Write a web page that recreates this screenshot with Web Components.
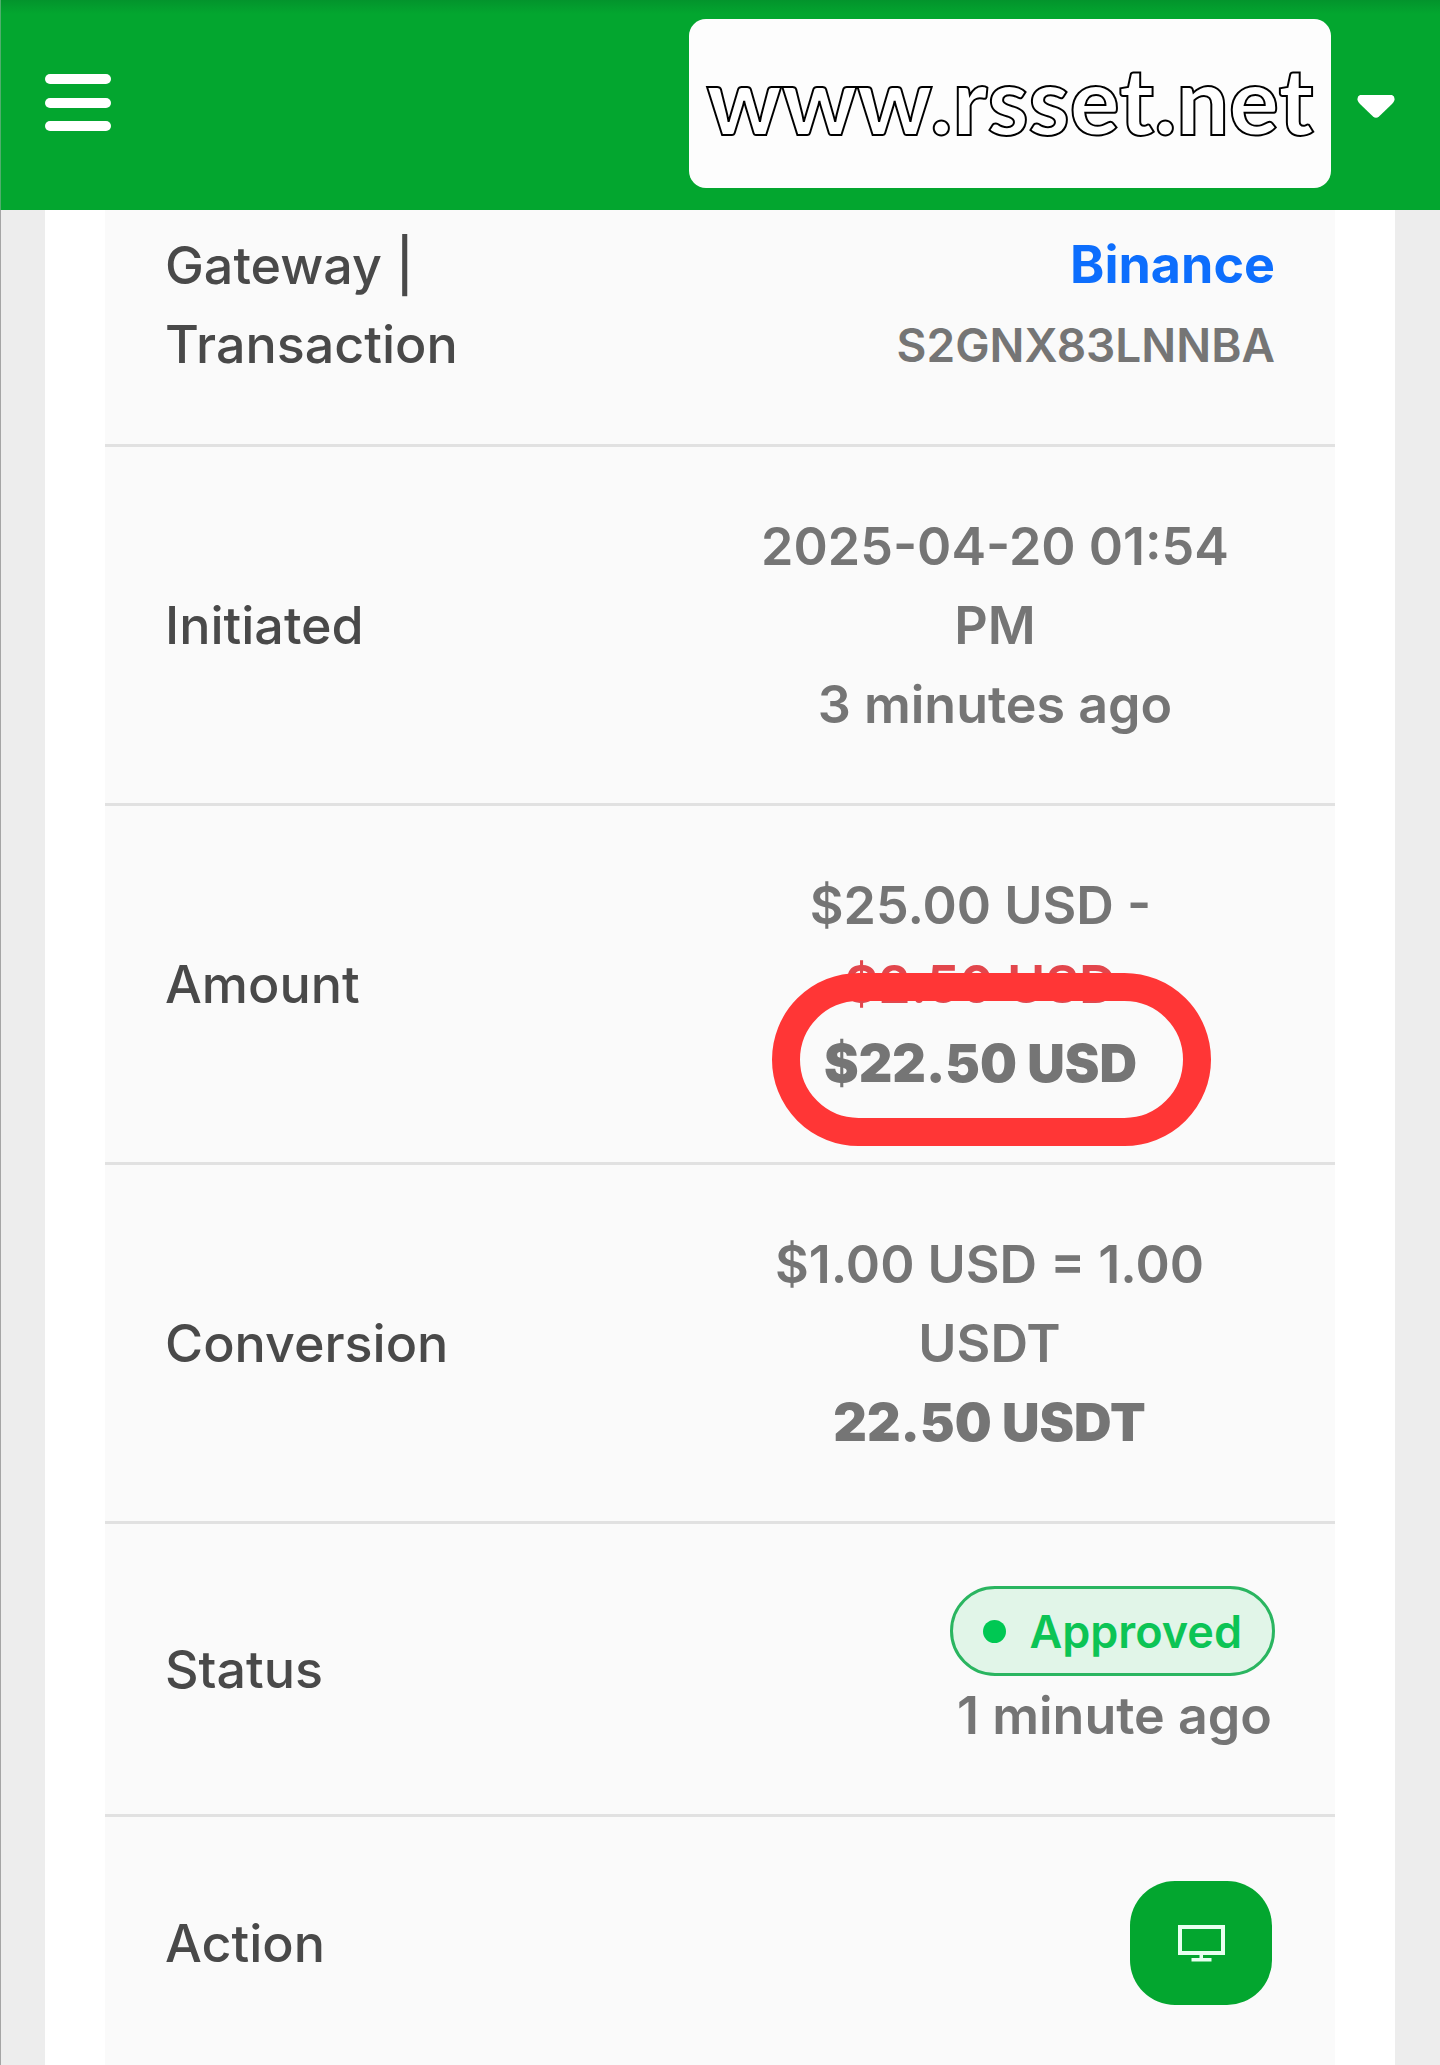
<!DOCTYPE html>
<html lang="en">
<head>
<meta charset="utf-8">
<meta name="viewport" content="width=device-width, initial-scale=1">
<title>Deposit history</title>
<style>
  html, body { margin: 0; }
  body { background: #ededed; font-family: Inter, "Liberation Sans", sans-serif; overflow-x: hidden; }
</style>
</head>
<body>
<deposit-page></deposit-page>

<template id="page-template">
  <style>
    :host { display: flex; flex-direction: column; min-height: 100vh; box-sizing: border-box; box-shadow: inset 1px 0 #a5a5a5; }
    main { flex: 1; display: flex; flex-direction: column; margin: 0 45px; padding: 0 60px; background: #fff; }
  </style>
  <site-header>www.rsset.net</site-header>
  <main><deposit-details></deposit-details></main>
</template>

<template id="header-template">
  <style>
    :host { display: block; }
    header {
      display: flex; align-items: center; box-sizing: border-box; height: 210px; padding: 0 45px 4px 44px;
      background: linear-gradient(#03942c, #03a62f 14px);
      border-left: 1px solid #4fae6c;
    }
    button { display: flex; padding: 0; border: 0; background: none; cursor: pointer; }
    .menu { margin-right: auto; }
    .account { align-items: center; gap: 26px; font: inherit; color: #fff; }
    .brand {
      display: flex; align-items: center; justify-content: center; box-sizing: border-box;
      width: 642px; height: 169px; padding-bottom: 8px; border-radius: 17px; background: #fdfdfd;
      font-family: Lato, Inter, sans-serif; font-size: 93px; font-weight: 900; line-height: 100px; -webkit-text-stroke: 2px #000;
    }
  </style>
  <header>
    <button class="menu" aria-label="Open menu">
      <svg width="66" height="58" viewBox="0 0 66 58" fill="#fff" aria-hidden="true">
        <rect width="66" height="10" rx="5"/><rect y="24" width="66" height="10" rx="5"/><rect y="47" width="66" height="10" rx="5"/>
      </svg>
    </button>
    <button class="account">
      <span class="brand"><slot></slot></span>
      <svg width="38" height="30" viewBox="0 -7 38 30" aria-hidden="true">
        <path d="M3 0H35Q38 1 37.500 5Q37 7 35 9L22 21.500Q19 24 16 21.500L3 9Q1 7 .5 5Q0 1 3 0Z" fill="#fff"/>
      </svg>
    </button>
  </header>
</template>

<template id="details-template">
  <style>
    :host { flex: 1; display: block; background: #fafafa; font-size: 52px; line-height: 79px; color: #757575; }
    table { width: 100%; border-collapse: separate; border-spacing: 0; }
    th, td { padding: 60px 60px 59px; vertical-align: middle; border-bottom: 3px solid #e1e1e1; }
    tr:first-child > * { padding-top: 15px; }
    tr:last-child > * { padding-top: 64px; border-bottom: 0; }
    th { width: 300px; padding-right: 0; text-align: left; font-weight: 500; color: #494949; }
    td { padding-left: 0; text-align: right; font-weight: 600; }
    a { color: #0d6efd; font-weight: 700; text-decoration: none; }
    small { font-size: 46px; }
    strong { font-weight: 900; }
    s { color: #e2464c; }
    .stack { display: flex; flex-direction: column; margin-left: auto; text-align: center; }
    .end { display: flex; flex-direction: column; align-items: flex-end; padding-right: 3px; }
    .date { width: 560px; }
    .amount { position: relative; width: 589px; }
    .rate { width: 571px; }
    .ring {
      position: absolute; top: 107px; right: 64px; box-sizing: border-box; width: 439px; height: 173px;
      border: 28px solid #ff3636; border-radius: 87px; pointer-events: none;
    }
    .status { display: flex; flex-direction: column; align-items: flex-end; padding-top: 2px; }
    .ago { padding-right: 3px; }
  </style>
  <table>
    <tbody>
      <tr><th scope="row">Gateway | Transaction</th><td><a href="#binance">Binance</a><br><small>S2GNX83LNNBA</small></td></tr>
      <tr><th scope="row">Initiated</th><td><div class="stack date"><span>2025-04-20 01:54</span><span>PM</span><span>3 minutes ago</span></div></td></tr>
      <tr><th scope="row">Amount</th><td><div class="stack amount"><span>$25.00 USD -</span><s>$2.50 USD</s><strong>$22.50 USD</strong><span class="ring"></span></div></td></tr>
      <tr><th scope="row">Conversion</th><td><div class="stack rate"><span>$1.00 USD = 1.00</span><span>USDT</span><strong>22.50 USDT</strong></div></td></tr>
      <tr><th scope="row">Status</th><td><div class="status"><status-badge>Approved</status-badge><span class="ago">1 minute ago</span></div></td></tr>
      <tr><th scope="row">Action</th><td><div class="end"><details-button></details-button></div></td></tr>
    </tbody>
  </table>
</template>

<template id="badge-template">
  <style>
    :host {
      display: flex; align-items: center; gap: 23px; box-sizing: border-box; height: 90px; padding: 0 30px;
      border: 3px solid #2ab560; border-radius: 45px; background: #e1f5e8;
      color: #0cc455; font-size: 45px; font-weight: 600;
    }
    i { width: 23px; height: 23px; border-radius: 50%; background: #00c853; }
  </style>
  <i></i><span><slot></slot></span>
</template>

<template id="button-template">
  <style>
    :host { display: block; }
    button {
      display: flex; align-items: center; justify-content: center; width: 142px; height: 124px; padding: 0;
      border: 0; border-radius: 45px; background: #03a62f; cursor: pointer;
    }
  </style>
  <button aria-label="View details">
    <svg width="47" height="37" viewBox="0 0 47 37" aria-hidden="true">
      <path d="M2 2H45V28H2Z" fill="none" stroke="#e8fff0" stroke-width="4"/>
      <path d="M21.500 30H25V33H33.500V36.500H13.500V33H21.500Z" fill="#e8fff0"/>
    </svg>
  </button>
</template>

<script>
  class TemplateElement extends HTMLElement {
    constructor() {
      super();
      const source = document.getElementById(this.constructor.template);
      this.attachShadow({ mode: "open" }).append(source.content.cloneNode(true));
    }
  }
  class StatusBadge extends TemplateElement { static template = "badge-template"; }
  class DetailsButton extends TemplateElement { static template = "button-template"; }
  class SiteHeader extends TemplateElement { static template = "header-template"; }
  class DepositDetails extends TemplateElement { static template = "details-template"; }
  class DepositPage extends TemplateElement { static template = "page-template"; }
  customElements.define("status-badge", StatusBadge);
  customElements.define("details-button", DetailsButton);
  customElements.define("site-header", SiteHeader);
  customElements.define("deposit-details", DepositDetails);
  customElements.define("deposit-page", DepositPage);
</script>
</body>
</html>
